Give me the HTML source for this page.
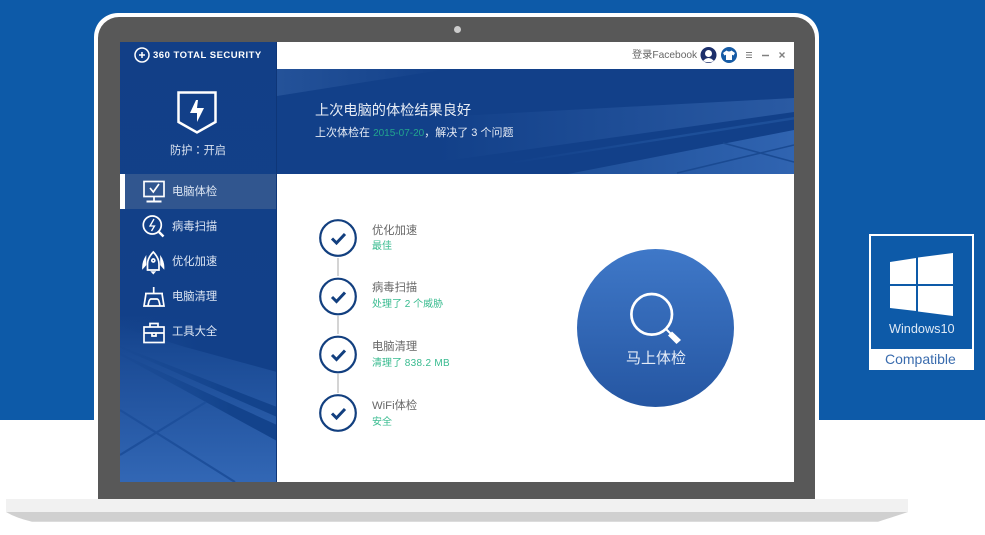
<!DOCTYPE html>
<html><head><meta charset="utf-8"><style>
html,body{margin:0;padding:0;background:#fff}
#p{position:relative;width:985px;height:535px;overflow:hidden;background:#fff;font-family:"Liberation Sans","Noto Sans CJK SC",sans-serif}
#p div,#p svg{position:absolute}
.t{white-space:nowrap;line-height:16px}
.h{font-size:11.3px;color:#666;left:372px}
.g{font-size:10px;color:#38bb8f;left:372px}
.n{font-size:11.3px;color:#dde6f3;left:172px}
</style></head><body><div id="p">
<div style="left:0;top:0;width:985px;height:420px;background:#0d5aa8"></div>
<div style="left:94px;top:13px;width:725px;height:420px;background:#fff;border-radius:24px 24px 0 0"></div>
<div style="left:98px;top:17px;width:717px;height:482px;background:#585858;border-radius:21px 21px 0 0"></div>
<div style="left:454px;top:26px;width:7px;height:7px;background:#ccc;border-radius:50%"></div>
<div style="left:120px;top:42px;width:674px;height:440px;background:#fff"></div>

<svg style="left:6px;top:499px" width="902" height="24"><rect width="902" height="13" fill="#f1f1f1"/><path d="M0 13H902Q890 17 872 22.700H26Q10 19 0 13Z" fill="#d0d0d0"/></svg>

<svg style="left:120px;top:42px" width="157" height="440">
<defs><linearGradient id="s" x1="0" y1="0" x2="0" y2="1"><stop offset="0" stop-color="#123f87"/><stop offset=".62" stop-color="#124089"/><stop offset=".7" stop-color="#1a4a94"/><stop offset="1" stop-color="#3267b5"/></linearGradient>
<linearGradient id="a" gradientUnits="userSpaceOnUse" x1="0" y1="0" x2="110" y2="0"><stop offset="0" stop-color="#13438c" stop-opacity=".1"/><stop offset="1" stop-color="#13438c"/></linearGradient>
<linearGradient id="c" gradientUnits="userSpaceOnUse" x1="0" y1="0" x2="157" y2="0"><stop offset="0" stop-color="#124089" stop-opacity="0"/><stop offset=".5" stop-color="#124089"/></linearGradient></defs>
<rect width="157" height="440" fill="url(#s)"/>
<path d="M0 285L65 305L157 330V270H0Z" fill="url(#c)"/>
<path d="M0 304L157 365V375L0 306Z" fill="url(#a)"/>
<path d="M0 311L157 383V399L0 313Z" fill="url(#a)"/>
<path d="M0 413L86 360M0 368L115 440" stroke="#1d4f9b" stroke-width="2.200" fill="none"/>
<rect x="156" width="1" height="440" fill="#0e3678"/>
</svg>
<div style="left:120px;top:174px;width:156px;height:35px;background:#31568f"></div>
<div style="left:120px;top:174px;width:5px;height:35px;background:#fff"></div>

<svg style="left:277px;top:69px" width="517" height="105">
<defs>
<linearGradient id="b" gradientUnits="userSpaceOnUse" x1="0" y1="0" x2="170" y2="0"><stop offset="0" stop-color="#245299"/><stop offset="1" stop-color="#124089"/></linearGradient>
<linearGradient id="w" gradientUnits="userSpaceOnUse" x1="160" y1="0" x2="516" y2="0"><stop offset="0" stop-color="#124089"/><stop offset="1" stop-color="#2a5aa3"/></linearGradient>
<linearGradient id="f" gradientUnits="userSpaceOnUse" x1="290" y1="0" x2="516" y2="0"><stop offset="0" stop-color="#1f5099"/><stop offset="1" stop-color="#3064b1"/></linearGradient>
<linearGradient id="z" gradientUnits="userSpaceOnUse" x1="230" y1="0" x2="400" y2="0"><stop offset="0" stop-color="#1d4f99" stop-opacity="0"/><stop offset="1" stop-color="#1d4f99"/></linearGradient>
</defs>
<rect width="517" height="105" fill="#124089"/>
<g transform="translate(1 0)">
<path d="M-1 0H170L-1 27Z" fill="url(#b)"/>
<path d="M516 29L160 48V93L516 43Z" fill="url(#w)"/>
<path d="M516 48V50.500L200 100V98Z" fill="url(#z)"/>
<path d="M516 61V105H290Z" fill="url(#f)"/>
<path d="M445 74L516 93M399 104L516 76" stroke="#1a4a92" stroke-width="1.500" fill="none"/>
</g></svg>

<svg style="left:134px;top:47px" width="18" height="18" fill="none" stroke="#fff"><circle cx="8" cy="8" r="7" stroke-width="1.500"/><path d="M5 8H11M8 5V11" stroke-width="1.500"/></svg>
<div class="t" style="left:153px;top:48px;font-size:9.500px;font-weight:bold;color:#fff;letter-spacing:.5px">360 TOTAL SECURITY</div>
<svg style="left:176px;top:90px" width="42" height="46" fill="none" stroke="#fff" stroke-width="2.500"><path d="M2.500 2.500H39.500V32L21 42.500L2.500 32Z"/><path d="M20 10H22L21 18H28L21 32V23H14Z" fill="#fff" stroke="none"/></svg>
<div class="t" style="left:170px;top:142px;font-size:11.200px;color:#dbe3f0">防护<span style="font-family:'Noto Sans CJK TC',sans-serif">：</span>开启</div>

<svg style="left:142px;top:178px" width="24" height="170" fill="none" stroke="#fff" stroke-width="1.700">
<rect x="2" y="3.500" width="20" height="15"/><path d="M8 10L11.300 14L17 6M12 19V23" /><path d="M4.500 23.500H19.500" stroke-width="2"/>
<circle cx="10.300" cy="47" r="9"/><path d="M17 54L21.500 58.500" stroke-width="2.500"/><path d="M12 41L8 48H12.500L9.500 53" stroke-width="1.300"/>
<path d="M11.300 74Q17 80 17 86V92H5.500V86Q5.500 80 11.300 74Z"/><circle cx="11.300" cy="82.500" r="1.500"/><path d="M4 78Q0 84 .5 91L4 87ZM18.500 78Q22.500 84 22 91L18.500 87ZM9 93.500L11.300 96L13.500 93.500Z" fill="#fff" stroke-width=".6"/>
<path d="M11.700 109V115M3 115.500H21M4 115.500L2 128H22L20 115.500M6 128Q7 121 9 121H15Q17 121 18 128"/>
<rect x="2" y="149" width="20" height="15.500"/><path d="M8 149V145.500H16V149M2 155H22M10 155V158H14V155"/>
</svg>
<div class="t n" style="top:184px">电脑体检</div>
<div class="t n" style="top:219px">病毒扫描</div>
<div class="t n" style="top:254px">优化加速</div>
<div class="t n" style="top:289px">电脑清理</div>
<div class="t n" style="top:324px">工具大全</div>

<div class="t" style="left:632px;top:48px;font-size:10.200px;color:#666">登录Facebook</div>
<svg style="left:700px;top:47px" width="18" height="18"><circle cx="8.500" cy="8" r="8" fill="#1c2f6b"/><circle cx="8.500" cy="6.500" r="3.500" fill="#fff"/><path d="M3 14Q8.500 8 14 14Q8.500 16.500 3 14Z" fill="#fff"/></svg>
<svg style="left:721px;top:47px" width="16" height="16"><circle cx="8" cy="8" r="8" fill="#165ba5"/><path d="M5.500 3.500L2 6L3.500 8.500L5 7.800V13H11V7.800L12.500 8.500L14 6L10.500 3.500Q8 5.500 5.500 3.500Z" fill="#fff"/></svg>
<svg style="left:745px;top:50px" width="42" height="12" stroke="#808080" stroke-width="1" fill="none"><path d="M1 2.500H7M1 5H7M1 7.500H7"/><path d="M17 5.500H24" stroke-width="1.500"/><path d="M34.500 2.500L39.500 7.500M39.500 2.500L34.500 7.500" stroke-width="1.400"/></svg>

<div class="t" style="left:315px;top:103px;font-size:14.200px;color:#e8edf5">上次电脑的体检结果良好</div>
<div class="t" style="left:315px;top:125px;font-size:11px;color:#e6ebf4">上次体检在 <span style="color:#22a58e;font-size:10px">2015-07-20</span>，解决了 3 个问题</div>

<svg style="left:318px;top:218px" width="40" height="216">
<path d="M20 40V58M20 98V116M20 156V175" stroke="#d4d4d4" stroke-width="2"/>
<g fill="none" stroke="#123f7f"><circle cx="20" cy="20" r="17.800" stroke-width="2.200"/><circle cx="20" cy="78.500" r="17.800" stroke-width="2.200"/><circle cx="20" cy="136.500" r="17.800" stroke-width="2.200"/><circle cx="20" cy="195" r="17.800" stroke-width="2.200"/>
<path d="M14 20.500L18.500 25L27 16M14 79L18.500 83.500L27 74.500M14 137L18.500 141.500L27 132.500M14 195.500L18.500 200L27 191" stroke-width="3"/></g></svg>
<div class="t h" style="top:223px">优化加速</div><div class="t g" style="top:239px">最佳</div>
<div class="t h" style="top:280px">病毒扫描</div><div class="t g" style="top:297px">处理了 2 个威胁</div>
<div class="t h" style="top:339px">电脑清理</div><div class="t g" style="top:356px">清理了 <span style="letter-spacing:.3px">838.2 MB</span></div>
<div class="t h" style="top:398px">WiFi体检</div><div class="t g" style="top:415px">安全</div>

<div style="left:577px;top:249px;width:157px;height:158px;border-radius:50%;background:linear-gradient(#3f78c8,#2556a2)"></div>
<svg style="left:625px;top:290px" width="60" height="60" fill="none" stroke="#fff"><circle cx="26.700" cy="24.300" r="20.300" stroke-width="2.700"/><path d="M41.500 39.500L46 44" stroke-width="2"/><path d="M47 41.500L56 50L51.500 54L43 45.500Z" fill="#fff" stroke="none"/></svg>
<div class="t" style="left:626px;top:351px;font-size:15px;color:#e5ecf7">马上体检</div>

<div style="left:869px;top:234px;width:105px;height:136px;background:#fff"></div>
<div style="left:871px;top:236px;width:101px;height:113px;background:#0d5aa8"></div>
<svg style="left:889px;top:252px" width="65" height="65" fill="#fff"><path d="M1 10L27 6V32H1ZM29 5.500L64 1V32H29ZM1 34H27V59L1 56ZM29 34H64V64L29 59.500Z"/></svg>
<div class="t" style="left:889px;top:321px;font-size:12.700px;color:#dfe9f5">Windows10</div>
<div class="t" style="left:885px;top:351px;font-size:14px;color:#3a6cae">Compatible</div>
</div></body></html>
